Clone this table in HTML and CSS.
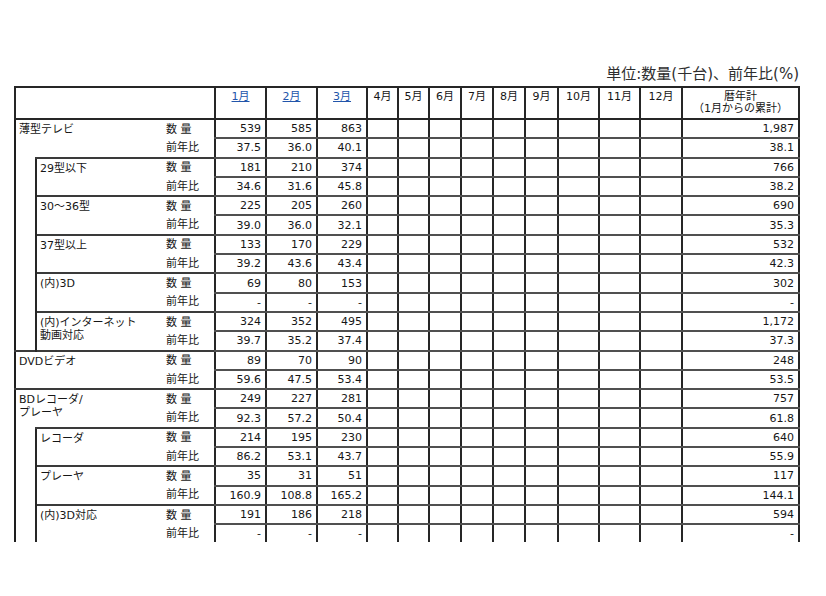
FILE: index.html
```html
<!DOCTYPE html>
<html lang="ja">
<head>
<meta charset="utf-8">
<title>出荷実績</title>
<link rel="stylesheet" href="styles.css">
</head>
<body>
<div class="page">
  <div class="unit">単位:数量(千台)、前年比(%)</div>
  <div class="clip">
    <table class="grid">
      <colgroup>
        <col class="w-c0"><col class="w-c1"><col class="w-c2">
        <col class="w-51"><col class="w-51"><col class="w-50">
        <col class="w-31"><col class="w-31"><col class="w-32"><col class="w-32"><col class="w-32"><col class="w-33">
        <col class="w-41"><col class="w-41"><col class="w-42">
        <col class="w-117">
      </colgroup>
      <thead>
        <tr class="head">
          <th colspan="3" class="hd"></th>
          <th class="hd"><a href="#">1月</a></th>
          <th class="hd"><a href="#">2月</a></th>
          <th class="hd"><a href="#">3月</a></th>
          <th class="hd">4月</th>
          <th class="hd">5月</th>
          <th class="hd">6月</th>
          <th class="hd">7月</th>
          <th class="hd">8月</th>
          <th class="hd">9月</th>
          <th class="hd">10月</th>
          <th class="hd">11月</th>
          <th class="hd">12月</th>
          <th class="hd">暦年計<br>（1月からの累計）</th>
        </tr>
      </thead>
      <tbody>
        <tr>
          <td colspan="2" rowspan="2" class="item top">薄型テレビ</td>
          <td class="kind top">数 量</td>
          <td class="n">539</td><td class="n">585</td><td class="n">863</td>
          <td></td><td></td><td></td><td></td><td></td><td></td><td></td><td></td><td></td>
          <td class="n">1,987</td>
        </tr>
        <tr>
          <td class="kind">前年比</td>
          <td class="n">37.5</td><td class="n">36.0</td><td class="n">40.1</td>
          <td></td><td></td><td></td><td></td><td></td><td></td><td></td><td></td><td></td>
          <td class="n">38.1</td>
        </tr>
        <tr>
          <td rowspan="10" class="indent"></td>
          <td rowspan="2" class="item sub top">29型以下</td>
          <td class="kind top">数 量</td>
          <td class="n">181</td><td class="n">210</td><td class="n">374</td>
          <td></td><td></td><td></td><td></td><td></td><td></td><td></td><td></td><td></td>
          <td class="n">766</td>
        </tr>
        <tr>
          <td class="kind">前年比</td>
          <td class="n">34.6</td><td class="n">31.6</td><td class="n">45.8</td>
          <td></td><td></td><td></td><td></td><td></td><td></td><td></td><td></td><td></td>
          <td class="n">38.2</td>
        </tr>
        <tr>
          <td rowspan="2" class="item sub top">30～36型</td>
          <td class="kind top">数 量</td>
          <td class="n">225</td><td class="n">205</td><td class="n">260</td>
          <td></td><td></td><td></td><td></td><td></td><td></td><td></td><td></td><td></td>
          <td class="n">690</td>
        </tr>
        <tr>
          <td class="kind">前年比</td>
          <td class="n">39.0</td><td class="n">36.0</td><td class="n">32.1</td>
          <td></td><td></td><td></td><td></td><td></td><td></td><td></td><td></td><td></td>
          <td class="n">35.3</td>
        </tr>
        <tr>
          <td rowspan="2" class="item sub top">37型以上</td>
          <td class="kind top">数 量</td>
          <td class="n">133</td><td class="n">170</td><td class="n">229</td>
          <td></td><td></td><td></td><td></td><td></td><td></td><td></td><td></td><td></td>
          <td class="n">532</td>
        </tr>
        <tr>
          <td class="kind">前年比</td>
          <td class="n">39.2</td><td class="n">43.6</td><td class="n">43.4</td>
          <td></td><td></td><td></td><td></td><td></td><td></td><td></td><td></td><td></td>
          <td class="n">42.3</td>
        </tr>
        <tr>
          <td rowspan="2" class="item sub top">(内)3D</td>
          <td class="kind top">数 量</td>
          <td class="n">69</td><td class="n">80</td><td class="n">153</td>
          <td></td><td></td><td></td><td></td><td></td><td></td><td></td><td></td><td></td>
          <td class="n">302</td>
        </tr>
        <tr>
          <td class="kind">前年比</td>
          <td class="n">-</td><td class="n">-</td><td class="n">-</td>
          <td></td><td></td><td></td><td></td><td></td><td></td><td></td><td></td><td></td>
          <td class="n">-</td>
        </tr>
        <tr>
          <td rowspan="2" class="item sub top">(内)インターネット<br>動画対応</td>
          <td class="kind top">数 量</td>
          <td class="n">324</td><td class="n">352</td><td class="n">495</td>
          <td></td><td></td><td></td><td></td><td></td><td></td><td></td><td></td><td></td>
          <td class="n">1,172</td>
        </tr>
        <tr>
          <td class="kind">前年比</td>
          <td class="n">39.7</td><td class="n">35.2</td><td class="n">37.4</td>
          <td></td><td></td><td></td><td></td><td></td><td></td><td></td><td></td><td></td>
          <td class="n">37.3</td>
        </tr>
        <tr>
          <td colspan="2" rowspan="2" class="item top">DVDビデオ</td>
          <td class="kind top">数 量</td>
          <td class="n">89</td><td class="n">70</td><td class="n">90</td>
          <td></td><td></td><td></td><td></td><td></td><td></td><td></td><td></td><td></td>
          <td class="n">248</td>
        </tr>
        <tr>
          <td class="kind">前年比</td>
          <td class="n">59.6</td><td class="n">47.5</td><td class="n">53.4</td>
          <td></td><td></td><td></td><td></td><td></td><td></td><td></td><td></td><td></td>
          <td class="n">53.5</td>
        </tr>
        <tr>
          <td colspan="2" rowspan="2" class="item top">BDレコーダ/<br>プレーヤ</td>
          <td class="kind top">数 量</td>
          <td class="n">249</td><td class="n">227</td><td class="n">281</td>
          <td></td><td></td><td></td><td></td><td></td><td></td><td></td><td></td><td></td>
          <td class="n">757</td>
        </tr>
        <tr>
          <td class="kind">前年比</td>
          <td class="n">92.3</td><td class="n">57.2</td><td class="n">50.4</td>
          <td></td><td></td><td></td><td></td><td></td><td></td><td></td><td></td><td></td>
          <td class="n">61.8</td>
        </tr>
        <tr>
          <td rowspan="6" class="indent"></td>
          <td rowspan="2" class="item sub top">レコーダ</td>
          <td class="kind top">数 量</td>
          <td class="n">214</td><td class="n">195</td><td class="n">230</td>
          <td></td><td></td><td></td><td></td><td></td><td></td><td></td><td></td><td></td>
          <td class="n">640</td>
        </tr>
        <tr>
          <td class="kind">前年比</td>
          <td class="n">86.2</td><td class="n">53.1</td><td class="n">43.7</td>
          <td></td><td></td><td></td><td></td><td></td><td></td><td></td><td></td><td></td>
          <td class="n">55.9</td>
        </tr>
        <tr>
          <td rowspan="2" class="item sub top">プレーヤ</td>
          <td class="kind top">数 量</td>
          <td class="n">35</td><td class="n">31</td><td class="n">51</td>
          <td></td><td></td><td></td><td></td><td></td><td></td><td></td><td></td><td></td>
          <td class="n">117</td>
        </tr>
        <tr>
          <td class="kind">前年比</td>
          <td class="n">160.9</td><td class="n">108.8</td><td class="n">165.2</td>
          <td></td><td></td><td></td><td></td><td></td><td></td><td></td><td></td><td></td>
          <td class="n">144.1</td>
        </tr>
        <tr>
          <td rowspan="2" class="item sub top">(内)3D対応</td>
          <td class="kind top">数 量</td>
          <td class="n">191</td><td class="n">186</td><td class="n">218</td>
          <td></td><td></td><td></td><td></td><td></td><td></td><td></td><td></td><td></td>
          <td class="n">594</td>
        </tr>
        <tr>
          <td class="kind">前年比</td>
          <td class="n">-</td><td class="n">-</td><td class="n">-</td>
          <td></td><td></td><td></td><td></td><td></td><td></td><td></td><td></td><td></td>
          <td class="n">-</td>
        </tr>
      </tbody>
    </table>
  </div>
</div>
</body>
</html>
```

FILE: styles.css
```css
html, body {
  margin: 0;
  padding: 0;
  background: #ffffff;
}

body {
  font-family: "DejaVu Sans", "Noto Sans CJK JP", sans-serif;
  color: #161616;
}

.page {
  padding: 64px 0 0 14px;
}

.unit {
  width: 785px;
  height: 22px;
  text-align: right;
  font-size: 15px;
  line-height: 20px;
  color: #2e2e2e;
}

.clip {
  height: 456px;
  overflow: hidden;
}

.grid {
  border-collapse: collapse;
  table-layout: fixed;
  width: 785px;
  font-size: 11px;
  line-height: 13px;
  border: 2px solid #1e1e1e;
}

.w-c0 { width: 21px; }
.w-c1 { width: 126px; }
.w-c2 { width: 53px; }
.w-51 { width: 51px; }
.w-50 { width: 50px; }
.w-31 { width: 31px; }
.w-32 { width: 32px; }
.w-33 { width: 33px; }
.w-41 { width: 41px; }
.w-42 { width: 42px; }
.w-117 { width: 117px; }

.grid td,
.grid th {
  padding: 0;
  white-space: nowrap;
  overflow: hidden;
  border-style: solid;
  border-color: #505050 #262626;
  border-width: 2px;
}

.grid tbody tr {
  height: 19.3px;
}

.head {
  height: 32px;
}

.grid th.hd {
  font-weight: normal;
  text-align: center;
  vertical-align: top;
  padding-top: 3px;
  line-height: 12px;
  border-color: #262626;
}

.hd a {
  color: #2255aa;
  text-decoration: underline;
}

.grid td.item,
.grid td.kind,
.grid td.indent {
  border-style: none;
}

.grid td.item {
  vertical-align: top;
  text-align: left;
  padding: 3px 0 0 3px;
}

.grid td.item.sub {
  border-left: 2px solid #262626;
}

.grid td.top {
  border-top: 2px solid #3a3a3a;
}

.grid td.kind {
  text-align: left;
  padding-left: 4px;
}

.grid td.n {
  text-align: right;
  padding-right: 4px;
}
```
